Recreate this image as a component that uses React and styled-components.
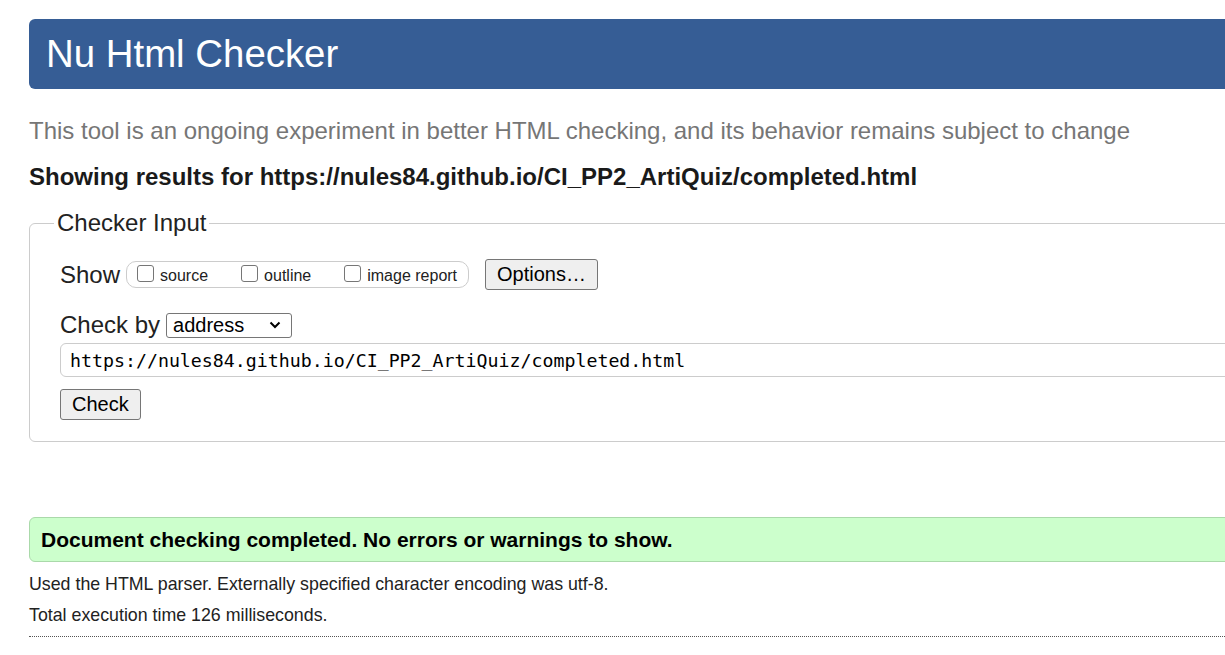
import React from 'react'
import styled, { createGlobalStyle } from 'styled-components'

const Global = createGlobalStyle`
    html, body {
        margin: 0;
        padding: 0;
        background: #fff;
        overflow: hidden;
    }
    body {
        font-family: "Liberation Sans", Arial, sans-serif;
        color: #222;
    }
`;

const Page = styled.div`
    width: 1320px;
    padding: 19px 0 0 29px;
    display: flex;
    flex-direction: column;
`;

const Header = styled.h1`
    margin: 0;
    height: 70px;
    background: #365d95;
    color: #fff;
    border-radius: 6px;
    padding-left: 17px;
    font-size: 38.4px;
    font-weight: normal;
    line-height: 70px;
`;

const Tagline = styled.p`
    margin: 27px 0 0;
    color: #767676;
    font-size: 24px;
    line-height: 30px;
`;

const Results = styled.p`
    margin: 16px 0 0;
    font-size: 24px;
    font-weight: bold;
    line-height: 30px;
    color: #1a1a1a;
`;

const Fieldset = styled.fieldset`
    margin: 17px 0 0;
    padding: 0 0 21px 30px;
    border: 1px solid #ccc;
    border-radius: 6px;
    display: flex;
    flex-direction: column;
    align-items: flex-start;
`;

const Legend = styled.legend`
    margin-left: -6px;
    padding: 0 3px;
    font-size: 24px;
    line-height: 28px;
    color: #222;
`;

const Row = styled.div`
    display: flex;
    align-items: center;
    gap: ${p => p.$gap || 6}px;
    margin-top: ${p => p.$top}px;
    font-size: 24px;
    line-height: 28px;
`;

const Group = styled.div`
    display: flex;
    align-items: center;
    height: 25px;
    border: 1px solid #ccc;
    border-radius: 10px;
    padding: 0 11px 0 10px;
    gap: 33px;
`;

const Opt = styled.label`
    display: flex;
    align-items: center;
    gap: 6px;
    font-size: 16px;
    line-height: 18px;
    padding-top: 3px;
`;

const Box = styled.span`
    width: 15px;
    height: 15px;
    border: 1px solid #767676;
    border-radius: 3px;
    background: #fff;
    margin-top: -6px;
`;

const Button = styled.button`
    font-family: "Liberation Sans", Arial, sans-serif;
    font-size: 20px;
    color: #000;
    background: #efefef;
    border: 1px solid #767676;
    border-radius: 3px;
    height: ${p => p.$h}px;
    padding: 0 ${p => p.$pad}px;
    margin-left: ${p => p.$left || 0}px;
    margin-top: ${p => p.$top || 0}px;
`;

const Select = styled.div`
    display: flex;
    align-items: center;
    justify-content: space-between;
    box-sizing: border-box;
    width: 126px;
    height: 25px;
    border: 1px solid #767676;
    border-radius: 3px;
    padding: 0 10px 0 6px;
    font-size: 20px;
    color: #000;
`;

const Address = styled.div`
    box-sizing: border-box;
    width: 1260px;
    height: 34px;
    margin-top: 4px;
    border: 1px solid #ccc;
    border-radius: 6px;
    padding-left: 9px;
    display: flex;
    align-items: center;
    font-family: "DejaVu Sans Mono", "Liberation Mono", monospace;
    font-size: 18.25px;
    color: #000;
`;

const Success = styled.div`
    margin-top: 75px;
    height: 43px;
    background: #ccffcc;
    border: 1px solid #aad9aa;
    border-radius: 6px;
    padding-left: 11px;
    display: flex;
    align-items: center;
    font-size: 21px;
    font-weight: bold;
    color: #000;
`;

const Note = styled.p`
    margin: ${p => p.$top}px 0 0;
    font-size: 17.8px;
    line-height: 20px;
    color: #222;
`;

const Rule = styled.hr`
    margin: 11px 0 0;
    border: 0;
    border-top: 1px dotted #555;
    height: 0;
`;

function Chevron() {
    return (
        <svg width="12" height="8" viewBox="0 0 12 8">
            <path d="M1.5 1.5 L6 6 L10.5 1.5" fill="none" stroke="#000" strokeWidth="2" />
        </svg>
    )
}

export default function App() {
    return (
        <>
            <Global />
            <Page>
                <Header>Nu Html Checker</Header>
                <Tagline>This tool is an ongoing experiment in better HTML checking, and its behavior remains subject to change</Tagline>
                <Results>Showing results for https://nules84.github.io/CI_PP2_ArtiQuiz/completed.html</Results>
                <Fieldset>
                    <Legend>Checker Input</Legend>
                    <Row $top={22}>
                        Show
                        <Group>
                            <Opt><Box />source</Opt>
                            <Opt><Box />outline</Opt>
                            <Opt><Box />image report</Opt>
                        </Group>
                        <Button $h={31} $pad={11} $left={10}>Options…</Button>
                    </Row>
                    <Row $top={21}>
                        Check by
                        <Select>address<Chevron /></Select>
                    </Row>
                    <Address>https://nules84.github.io/CI_PP2_ArtiQuiz/completed.html</Address>
                    <Button $h={31} $pad={11} $top={12}>Check</Button>
                </Fieldset>
                <Success>Document checking completed. No errors or warnings to show.</Success>
                <Note $top={12}>Used the HTML parser. Externally specified character encoding was utf-8.</Note>
                <Note $top={11}>Total execution time 126 milliseconds.</Note>
                <Rule />
            </Page>
        </>
    )
}
